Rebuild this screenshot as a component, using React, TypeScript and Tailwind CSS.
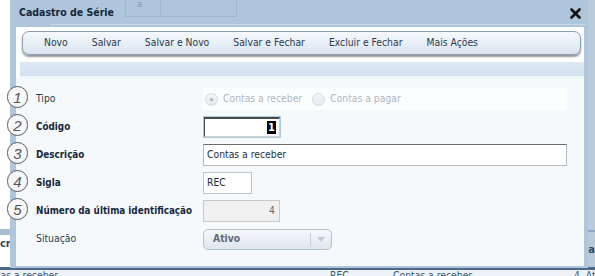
import React from "react";

const font = { fontFamily: '"DejaVu Sans Condensed", "DejaVu Sans", Tahoma, sans-serif' };

function Badge({ n }: { n: number }) {
  return (
    <div className="absolute left-[-9px] top-[-2px] w-[21px] h-[22px] rounded-full border-[1.5px] border-[#5a5a5a] bg-[#f7f7f7] flex items-center justify-center text-[15px] italic text-[#555] leading-none"
      style={{ fontFamily: '"Liberation Sans", sans-serif', fontWeight: 300 }}>
      {n}
    </div>
  );
}

function Row({ n, label, bold, children }: { n?: number; label: string; bold?: boolean; children: React.ReactNode }) {
  return (
    <div className="relative flex items-center h-[22px]">
      {n ? <Badge n={n} /> : null}
      <div className={`w-[187px] pl-[20px] whitespace-nowrap ${bold ? "text-[9.8px] font-bold text-[#16293a]" : "text-[10.3px] text-[#2a3b4a]"}`}>{label}</div>
      {children}
    </div>
  );
}

function Radio({ checked, label }: { checked?: boolean; label: string }) {
  return (
    <div className="flex items-center gap-[5px]">
      <div className="w-[13px] h-[13px] rounded-full border border-[#d3d9df] bg-gradient-to-b from-[#f3f5f7] to-[#e6eaee] flex items-center justify-center">
        {checked ? <div className="w-[3px] h-[3px] rounded-full bg-[#a3acb5]" /> : null}
      </div>
      <span className="text-[10.3px] text-[#b0b7be]">{label}</span>
    </div>
  );
}

export default function App() {
  return (
    <div className="relative w-[595px] h-[276px] overflow-hidden bg-white" style={font}>
      {/* background page */}
      <div className="absolute left-0 top-[229px] w-[12px] h-[6px] bg-[#a9bed3]" />
      <div className="absolute left-[0px] top-[236px] text-[11px] font-bold text-[#2d4a66]">cr</div>
      <div className="absolute right-0 top-0 w-[8px] h-[268px] bg-[#b9cadb]" />
      <div className="absolute right-0 top-[230px] w-[8px] h-[2px] bg-[#8ea8c1]" />
      <div className="absolute right-[0px] top-[242px] text-[11px] font-bold text-[#2d4a66]">a</div>
      <div className="absolute left-0 top-[267px] w-[595px] h-[3px] bg-[#4b6887]" />
      <div className="absolute left-0 top-[270px] w-[595px] h-[6px] bg-[#eef2f6]" />
      <div className="absolute left-[-9px] top-[269px] text-[10.3px] text-[#3c5a78] leading-[13px]">ntas a receber</div>
      <div className="absolute left-[330px] top-[269px] text-[10.3px] text-[#3c5a78] leading-[13px]">REC</div>
      <div className="absolute left-[393px] top-[269px] text-[10.3px] text-[#3c5a78] leading-[13px]">Contas a receber</div>
      <div className="absolute left-[574px] top-[269px] text-[10.3px] text-[#3c5a78] leading-[13px]">4&nbsp;&nbsp;Ativo</div>

      {/* window */}
      <div className="absolute left-[10px] top-0 w-[578px] h-[268px] flex flex-col bg-[#aec5dc]">
        <div className="relative h-[27px] flex items-center justify-between pl-[9px] pr-[7px]">
          <div className="absolute left-[115px] top-0 w-px h-[17px] bg-[#9fb6cc]" />
          <div className="absolute left-[150px] top-0 w-px h-[17px] bg-[#9fb6cc]" />
          <div className="absolute left-[226px] top-0 w-px h-[17px] bg-[#9fb6cc]" />
          <div className="absolute left-[115px] top-[16px] w-[112px] h-px bg-[#9fb6cc]" />
          <div className="absolute left-[127px] top-[-2px] text-[9px] text-[#7f97ae]">a</div>
          <div className="absolute left-[40px] top-[24px] w-[536px] h-px bg-[#c8d8e7]" />
          <span className="relative text-[10.5px] font-bold text-[#15283a] -mt-[1px]">Cadastro de Série</span>
          <svg width="11" height="11" viewBox="0 0 11 11" className="relative -mt-[1px]">
            <path d="M1.5 1.5 L9.5 9.5 M9.5 1.5 L1.5 9.5" stroke="#111" strokeWidth="2.6" strokeLinecap="round" />
          </svg>
        </div>
        <div className="flex-1 ml-[6px] mr-[4px] mb-[2px] bg-white flex flex-col">
          <div className="pt-[4px] pl-[6px] pr-[3px] bg-white">
            <div className="h-[24px] rounded-[7px] border border-[#8f9cab] bg-gradient-to-b from-[#f6f9fc] to-[#dae5f1] shadow-[0_2px_2px_rgba(60,70,80,0.55)] flex items-center pl-[9px] text-[10.3px] text-[#2c3a48]">
              <span className="px-[12px]">Novo</span>
              <span className="px-[12px]">Salvar</span>
              <span className="px-[12px]">Salvar e Novo</span>
              <span className="px-[12px]">Salvar e Fechar</span>
              <span className="px-[12px]">Excluir e Fechar</span>
              <span className="px-[12px]">Mais Ações</span>
            </div>
          </div>
          <div className="mt-[7px] ml-[4px] h-[15px] bg-gradient-to-b from-[#dfe9f4] to-[#d5e2ef] border-b border-[#edf2f8]" />
          <div className="flex-1 bg-[#f6f9fc] pt-[11px] flex flex-col gap-[6px]">
            <Row n={1} label="Tipo">
              <div className="w-[364px] h-[22px] bg-[#fcfdfe] flex items-center gap-[10px] pl-[2px]">
                <Radio checked label="Contas a receber" />
                <Radio label="Contas a pagar" />
              </div>
            </Row>
            <Row n={2} label="Código" bold>
              <div className="w-[78px] h-[22px] border border-[#a9cbeb] p-0">
                <div className="w-full h-full bg-white border-t-2 border-l border-[#4a4a4a] border-r border-b border-r-[#cfcfcf] border-b-[#cfcfcf] flex items-center justify-end pr-[3px]">
                  <span className="bg-black text-white text-[11px] font-bold leading-[13px] px-[1px]">1</span>
                </div>
              </div>
            </Row>
            <Row n={3} label="Descrição" bold>
              <div className="w-[364px] h-[22px] bg-white border border-[#b9b9b9] border-t-[#6d6d6d] flex items-center pl-[3px] text-[10.3px] text-[#1b3040]">
                Contas a receber
              </div>
            </Row>
            <Row n={4} label="Sigla" bold>
              <div className="w-[49px] h-[22px] bg-white border border-[#c3c3c3] flex items-center pl-[3px] text-[10.3px] text-[#1b3040]">
                REC
              </div>
            </Row>
            <Row n={5} label="Número da última identificação" bold>
              <div className="w-[77px] h-[22px] bg-[#f0f0f0] border border-[#c8c8c8] flex items-center justify-end pr-[4px] text-[10.3px] text-[#6b6b6b]">
                4
              </div>
            </Row>
            <Row label="Situação">
              <div className="w-[129px] h-[21px] rounded-[5px] border border-[#b7c1cb] bg-gradient-to-b from-[#f7f9fb] to-[#dde5ed] flex items-center">
                <span className="flex-1 pl-[9px] text-[10.3px] font-bold text-[#5f6870]">Ativo</span>
                <div className="w-px h-[13px] bg-[#c5ccd3]" />
                <svg width="20" height="10" viewBox="0 0 20 10">
                  <path d="M6 3 L14 3 L10 8 Z" fill="#c3c9cf" />
                </svg>
              </div>
            </Row>
          </div>
        </div>
      </div>
    </div>
  );
}
